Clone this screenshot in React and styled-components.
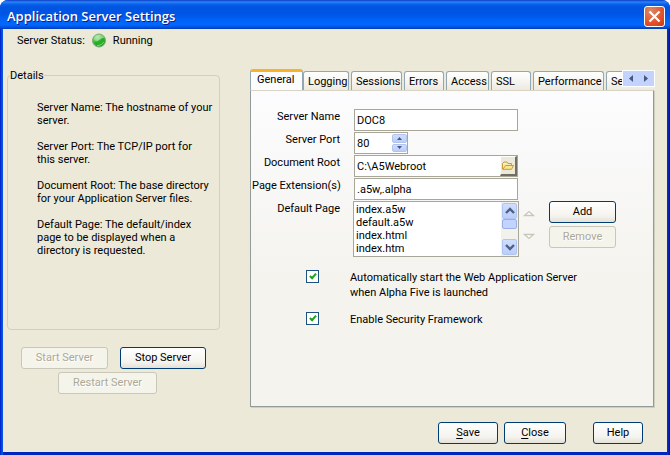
import React, { useState } from "react";
import styled, { createGlobalStyle, css } from "styled-components";

const FONT = 'Tahoma, Roboto, "Noto Sans", sans-serif';
const FACE = "#ece9d8";
const FRAME = "#a8a698";

const GlobalStyle = createGlobalStyle`
  *, *::before, *::after { box-sizing: border-box; }
  body { margin: 0; background: #fff; font: 11px/13px ${FONT}; color: #000; }
  button, input, select { font: inherit; color: inherit; margin: 0; }
  p, h1 { margin: 0; }
`;

const Window = styled.main`
  display: flex;
  flex-direction: column;
  min-height: 100vh;
  background: linear-gradient(90deg, #0019cf, #0855dd 2px, #0855dd calc(100% - 3px), #0831d9 calc(100% - 3px), #001596);
  border-radius: 8px 8px 0 0;
  overflow: hidden;
`;

const TitleBar = styled.header`
  display: flex;
  align-items: center;
  justify-content: space-between;
  height: 29px;
  padding: 3px 5px 0 7px;
  background: linear-gradient(
    180deg,
    #0f3cc8 0,
    #2a86f5 2px,
    #0a62ee 4px,
    #0054e0 7px,
    #0055e5 14px,
    #0064fa 21px,
    #0068ff 25px,
    #0048d0 28px,
    #003ab8 29px
  );
`;

const Title = styled.h1`
  font: 600 13px/18px "Open Sans", "Noto Sans", sans-serif;
  color: #fff;
  text-shadow: 1px 1px 0 #0f1f8a;
  white-space: nowrap;
`;

const CloseBox = styled.button`
  display: grid;
  place-items: center;
  width: 21px;
  height: 21px;
  padding: 0;
  border: 1px solid #fff;
  border-radius: 3px;
  background: radial-gradient(circle at 30% 20%, #d98a68, #e2512b 60%, #c83a12);
`;

const Client = styled.div`
  flex: 1;
  display: flex;
  flex-direction: column;
  margin: 0 3px 3px;
  padding: 3px 12px 8px 4px;
  background: ${FACE};
  box-shadow: 0 3px 0 #0026c0;
`;

const StatusRow = styled.div`
  display: flex;
  align-items: center;
  gap: 7px;
  height: 17px;
  padding-left: 10px;
`;

const Columns = styled.div`
  flex: 1;
  display: grid;
  grid-template-columns: minmax(0, 213fr) minmax(0, 405fr);
  column-gap: 30px;
  margin-top: 20px;
`;

const LeftColumn = styled.section`
  display: flex;
  flex-direction: column;
`;

const Details = styled.fieldset`
  min-width: 0;
  min-height: 261px;
  margin: 0;
  padding: 19px 2px 0 29px;
  border: 1px solid #d0d0bf;
  border-radius: 4px;
`;

const Legend = styled.legend`
  margin-left: -27px;
  padding: 0;
`;

const Note = styled.p`
  white-space: pre-line;
  & + & { margin-top: 13px; }
`;

const ServerButtons = styled.div`
  display: grid;
  justify-items: center;
  gap: 3px;
  margin-top: 17px;
  padding-right: 12px;
`;

const ButtonPair = styled.div`
  display: flex;
  gap: 12px;
  margin-right: -12px;
`;

const Button = styled.button`
  width: ${(p) => p.$width}px;
  height: 22px;
  padding: 0;
  border: 1px solid #003c74;
  border-radius: 3px;
  background: linear-gradient(#fff, #f4f3ee 70%, #e4e1d6);
  line-height: 20px;
  white-space: nowrap;
  &:disabled {
    border-color: #c9c7ba;
    background: #f5f4ea;
    color: #aca899;
    text-shadow: 1px 1px 0 #fff;
  }
`;

const TabControl = styled.section`
  display: flex;
  flex-direction: column;
`;

const TabStrip = styled.div`
  display: flex;
  align-items: flex-end;
  gap: 2px;
  height: 21px;
  overflow: hidden;
  position: relative;
`;

const Tab = styled.button`
  flex: none;
  width: ${(p) => p.$width}px;
  height: 19px;
  padding: 0 0 0 4px;
  border: 1px solid #91a7b4;
  border-bottom: 0;
  border-radius: 3px 3px 0 0;
  background: linear-gradient(#fff, #f4f3ee 60%, #ece9df);
  text-align: left;
  white-space: nowrap;
  ${(p) =>
    p.$active &&
    css`
      height: 21px;
      margin-right: -2px;
      padding: 0 0 3px 6px;
      border-top: 3px solid #fbb128;
      background: #fcfcfe;
    `}
`;

const TabScroller = styled.div`
  position: absolute;
  top: 1px;
  right: 0;
  display: flex;
  width: 33px;
  height: 17px;
  border: 1px solid #fff;
  background: #c3d3fd;
`;

const ScrollerButton = styled.button`
  flex: 1;
  display: grid;
  place-items: center;
  padding: 0;
  border: 0;
  background: none;
`;

const Panel = styled.div`
  flex: 1;
  display: flex;
  flex-direction: column;
  gap: 13px;
  margin-right: 1px;
  padding: 18px 12px 12px 1px;
  border: 1px solid #919b9c;
  border-top-color: #d8d4c4;
  background: linear-gradient(#fcfcfe, #f4f3ee 60%);
  box-shadow: 1px 1px 0 #d0cebf;
`;

const Form = styled.div`
  display: grid;
  grid-template-columns: 88px 166px 1fr;
  column-gap: 13px;
  row-gap: 1px;
`;

const FieldLabel = styled.label`
  grid-column: 1;
  padding-top: 1px;
  text-align: right;
  white-space: nowrap;
`;

const Field = styled.div`
  grid-column: 2;
  display: flex;
  width: ${(p) => p.$width}px;
  height: 22px;
  margin-left: 1px;
  border: 1px solid ${FRAME};
  background: #fff;
`;

const TextInput = styled.input`
  flex: 1;
  min-width: 0;
  padding: 1px 0 0 2px;
  border: 0;
  outline: 0;
  background: none;
  appearance: textfield;
  &::-webkit-inner-spin-button { display: none; }
`;

const Spinner = styled.div`
  display: grid;
  gap: 1px;
  width: 15px;
  padding: 1px 0;
`;

const BlueButton = styled.button`
  display: grid;
  place-items: center;
  min-height: 0;
  padding: 0;
  border: 1px solid #b0c4f4;
  border-radius: 2px;
  background: linear-gradient(#d0defd, #bccdfa);
`;

const BrowseButton = styled.button`
  display: grid;
  place-items: center;
  width: 17px;
  padding: 0;
  border: 1px solid #fff;
  border-right: 2px solid #716f64;
  border-bottom: 2px solid #716f64;
  background: ${FACE};
`;

const ListFrame = styled.div`
  display: flex;
  height: 56px;
  border: 1px solid ${FRAME};
  background: #fff;
`;

const ListBox = styled.select`
  flex: 1;
  min-width: 0;
  padding: 1px 0 0;
  border: 0;
  outline: 0;
  background: none;
  overflow-y: scroll;
  scrollbar-width: none;
  option {
    min-height: 13px;
    padding: 0 2px;
    line-height: 13px;
  }
`;

const ScrollBar = styled.div`
  display: grid;
  grid-template-rows: 16px 10px 1fr 16px;
  width: 17px;
  padding: 1px;
  background: #f3f1ec;
`;

const Thumb = styled.div`
  border: 1px solid #98b0e8;
  border-radius: 2px;
  background: #c3d3fd;
`;

const ListActions = styled.div`
  display: flex;
  align-items: flex-start;
  margin-left: -9px;
`;

const MoveButtons = styled.div`
  display: grid;
  gap: 13px;
  width: 26px;
  padding-top: 7px;
`;

const MoveButton = styled.button`
  display: grid;
  width: 12px;
  height: 10px;
  place-items: center;
  padding: 0;
  border: 0;
  background: none;
`;

const Stack = styled.div`
  display: grid;
  gap: 3px;
`;

const Options = styled.div`
  display: grid;
  gap: 12px;
  padding-left: 54px;
`;

const CheckLabel = styled.label`
  display: flex;
  gap: 31px;
  line-height: 15px;
`;

const CheckBox = styled.input`
  flex: none;
  appearance: none;
  display: grid;
  place-items: center;
  width: 13px;
  height: 13px;
  border: 1px solid #1c5180;
  background: #fff;
  &:checked::after {
    content: "";
    width: 4px;
    height: 7px;
    margin-top: -2px;
    border: solid #21a121;
    border-width: 0 2px 2px 0;
    transform: rotate(42deg);
  }
`;

const Footer = styled.footer`
  display: flex;
  justify-content: flex-end;
  gap: 6px;
  margin-top: 15px;
  padding-right: 12px;
  ${Button}:last-child { margin-left: 21px; }
`;

const Mnemonic = styled.u`
  text-underline-offset: 2px;
`;

function StatusBall() {
  return (
    <svg width="14" height="15" viewBox="0 0 14 15" role="img" aria-label="Running">
      <defs>
        <radialGradient id="ball" cx="0.4" cy="0.25" r="0.8">
          <stop offset="0" stopColor="#c4f0bc" />
          <stop offset="0.45" stopColor="#55c850" />
          <stop offset="1" stopColor="#159018" />
        </radialGradient>
      </defs>
      <circle cx="7" cy="7.5" r="6.5" fill="url(#ball)" stroke="#7aa878" />
      <path d="M1.500 6.500 Q1.500 2 7 1.500 Q11.500 2 12.300 5 Q9 5 7.500 7 Q5 9 1.500 6.500Z" fill="#a8e6a2" opacity=".5" />
      <path d="M2 9 Q6 8.500 8 6.500 T12 5 Q13 10 9 12.500 Q4 13 2 9Z" fill="#1fa822" opacity=".75" />
      <path d="M5 12.800 Q10 12.500 11.800 9" stroke="#7be070" fill="none" />
    </svg>
  );
}

function CrossIcon() {
  return (
    <svg width="13" height="13" viewBox="0 0 13 13">
      <path d="M1.500 1.500 L11.500 11.500 M11.500 1.500 L1.500 11.500" stroke="#fff" strokeWidth="2.2" />
    </svg>
  );
}

function Chevron({ down }) {
  return (
    <svg width="10" height="8" viewBox="0 0 10 8">
      <path d={down ? "M1 2 L5 6 L9 2" : "M1 6 L5 2 L9 6"} fill="none" stroke="#4d6185" strokeWidth="2.4" />
    </svg>
  );
}

function Arrow({ d, w = 5, h = 3 }) {
  return (
    <svg width={w} height={h} viewBox={`0 0 ${w} ${h}`}>
      <path d={d} fill="#45597c" />
    </svg>
  );
}

function HollowTriangle({ down }) {
  return (
    <svg width="12" height="7" viewBox="0 0 12 7">
      <path
        d={down ? "M1.500 1.500 H10.500 L6 5.500 Z" : "M1.500 5.500 H10.500 L6 1.500 Z"}
        fill="#fff"
        stroke="#c9c7ba"
        strokeWidth="1.300"
      />
    </svg>
  );
}

function FolderIcon() {
  return (
    <svg width="12" height="9" viewBox="0 0 12 9">
      <path d="M.5 8 V2.500 L2 1 H5 L6 2.500 H9.500 V4" fill="#f6ecb8" stroke="#c79a35" />
      <path d="M.8 8.300 L3.500 4.500 H11.500 L9.500 8.300 Z" fill="#fbe68e" stroke="#c79a35" />
    </svg>
  );
}

const NOTES = [
  "Server Name: The hostname of your\nserver.",
  "Server Port: The TCP/IP port for\nthis server.",
  "Document Root: The base directory\nfor your Application Server files.",
  "Default Page: The default/index\npage to be displayed when a\ndirectory is requested.",
];

const TABS = [
  ["General", 53],
  ["Logging", 46],
  ["Sessions", 51],
  ["Errors", 40],
  ["Access", 43],
  ["SSL", 40],
  ["Performance", 71],
  ["Security", 60],
];

const PAGES = ["index.a5w", "default.a5w", "index.html", "index.htm"];

export default function App() {
  const [tab, setTab] = useState("General");
  return (
    <>
      <GlobalStyle />
      <Window>
        <TitleBar>
          <Title>Application Server Settings</Title>
          <CloseBox aria-label="Close window"><CrossIcon /></CloseBox>
        </TitleBar>
        <Client>
          <StatusRow>
            <span>Server Status:</span>
            <StatusBall />
            <span>Running</span>
          </StatusRow>
          <Columns>
            <LeftColumn>
              <Details>
                <Legend>Details</Legend>
                {NOTES.map((n) => <Note key={n}>{n}</Note>)}
              </Details>
              <ServerButtons>
                <ButtonPair>
                  <Button $width={87} disabled>Start Server</Button>
                  <Button $width={86}>Stop Server</Button>
                </ButtonPair>
                <Button $width={99} disabled>Restart Server</Button>
              </ServerButtons>
            </LeftColumn>
            <TabControl>
              <TabStrip role="tablist">
                {TABS.map(([name, width]) => (
                  <Tab
                    key={name}
                    role="tab"
                    aria-selected={tab === name}
                    $active={tab === name}
                    $width={width}
                    onClick={() => setTab(name)}
                  >
                    {name}
                  </Tab>
                ))}
                <TabScroller>
                  <ScrollerButton aria-label="Previous tabs"><Arrow w={4} h={7} d="M4 0 V7 L0 3.500Z" /></ScrollerButton>
                  <ScrollerButton aria-label="Next tabs"><Arrow w={4} h={7} d="M0 0 V7 L4 3.500Z" /></ScrollerButton>
                </TabScroller>
              </TabStrip>
              <Panel role="tabpanel">
                <Form>
                  <FieldLabel htmlFor="name">Server Name</FieldLabel>
                  <Field $width={164}><TextInput id="name" defaultValue="DOC8" /></Field>
                  <FieldLabel htmlFor="port">Server Port</FieldLabel>
                  <Field $width={54}>
                    <TextInput id="port" type="number" defaultValue="80" />
                    <Spinner>
                      <BlueButton aria-label="Increase port"><Arrow d="M0 3 H5 L2.500 0Z" /></BlueButton>
                      <BlueButton aria-label="Decrease port"><Arrow d="M0 0 H5 L2.500 3Z" /></BlueButton>
                    </Spinner>
                  </Field>
                  <FieldLabel htmlFor="root">Document Root</FieldLabel>
                  <Field $width={164}>
                    <TextInput id="root" defaultValue="C:\A5Webroot" />
                    <BrowseButton aria-label="Browse"><FolderIcon /></BrowseButton>
                  </Field>
                  <FieldLabel htmlFor="ext">Page Extension(s)</FieldLabel>
                  <Field $width={164}><TextInput id="ext" defaultValue=".a5w,.alpha" /></Field>
                  <FieldLabel htmlFor="pages">Default Page</FieldLabel>
                  <ListFrame>
                    <ListBox id="pages" size={4}>
                      {PAGES.map((p) => <option key={p}>{p}</option>)}
                    </ListBox>
                    <ScrollBar>
                      <BlueButton aria-label="Scroll up"><Chevron /></BlueButton>
                      <Thumb />
                      <span />
                      <BlueButton aria-label="Scroll down"><Chevron down /></BlueButton>
                    </ScrollBar>
                  </ListFrame>
                  <ListActions>
                    <MoveButtons>
                      <MoveButton aria-label="Move up" disabled><HollowTriangle /></MoveButton>
                      <MoveButton aria-label="Move down" disabled><HollowTriangle down /></MoveButton>
                    </MoveButtons>
                    <Stack>
                      <Button $width={67}>Add</Button>
                      <Button $width={67} disabled>Remove</Button>
                    </Stack>
                  </ListActions>
                </Form>
                <Options>
                  <CheckLabel>
                    <CheckBox type="checkbox" defaultChecked />
                    <span>Automatically start the Web Application Server<br />when Alpha Five is launched</span>
                  </CheckLabel>
                  <CheckLabel>
                    <CheckBox type="checkbox" defaultChecked />
                    <span>Enable Security Framework</span>
                  </CheckLabel>
                </Options>
              </Panel>
            </TabControl>
          </Columns>
          <Footer>
            <Button $width={60}><Mnemonic>S</Mnemonic>ave</Button>
            <Button $width={62}><Mnemonic>C</Mnemonic>lose</Button>
            <Button $width={50}>Help</Button>
          </Footer>
        </Client>
      </Window>
    </>
  );
}
